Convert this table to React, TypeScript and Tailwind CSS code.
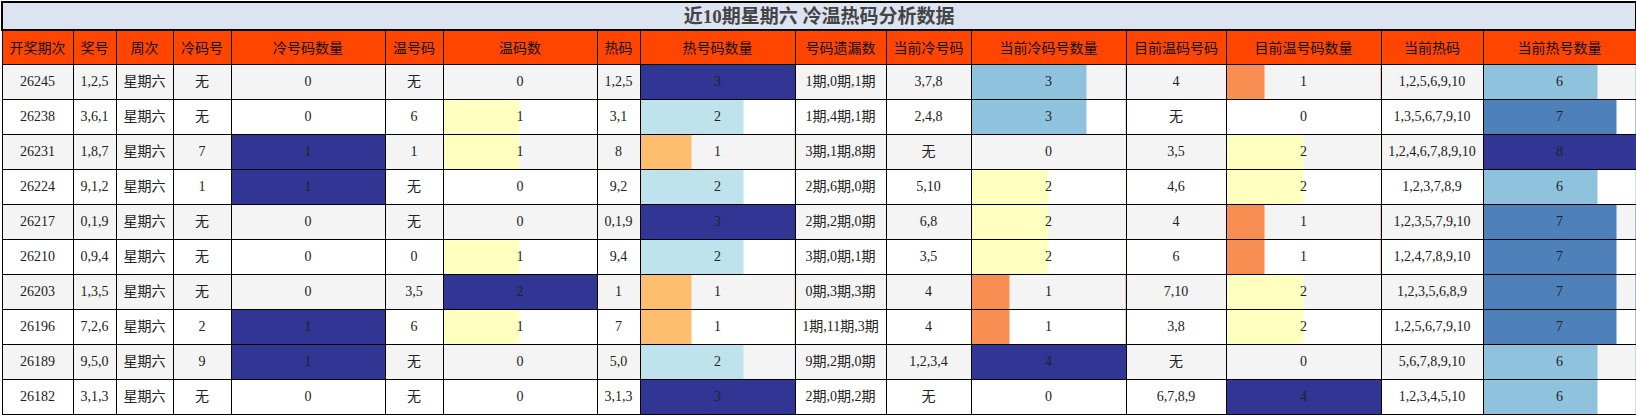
import React from "react";

type Bar = { v: number; pct: number; color: string };
type Cell = string | Bar;

const NAVY = "#313695";
const YELLOW = "#ffffbf";
const HOT1 = "#fdbf6f";
const HOT2 = "#bee3ed";
const ORANGE = "#f98e52";
const LB = "#8fc3dd";
const STEEL = "#4e81ba";

const b = (v: number, pct: number, color: string): Bar => ({ v, pct, color });
const z = (): Bar => ({ v: 0, pct: 0, color: "transparent" });

const headers = [
  "开奖期次",
  "奖号",
  "周次",
  "冷码号",
  "冷号码数量",
  "温号码",
  "温码数",
  "热码",
  "热号码数量",
  "号码遗漏数",
  "当前冷号码",
  "当前冷码号数量",
  "目前温码号码",
  "目前温号码数量",
  "当前热码",
  "当前热号数量",
];

// column widths read off the screenshot
const widths = [71, 43, 57, 58, 154, 58, 154, 43, 155, 91, 85, 155, 100, 155, 102, 153];

const rows: Cell[][] = [
  ["26245", "1,2,5", "星期六", "无", z(), "无", z(), "1,2,5", b(3, 100, NAVY), "1期,0期,1期", "3,7,8", b(3, 75, LB), "4", b(1, 25, ORANGE), "1,2,5,6,9,10", b(6, 75, LB)],
  ["26238", "3,6,1", "星期六", "无", z(), "6", b(1, 50, YELLOW), "3,1", b(2, 67, HOT2), "1期,4期,1期", "2,4,8", b(3, 75, LB), "无", z(), "1,3,5,6,7,9,10", b(7, 87.5, STEEL)],
  ["26231", "1,8,7", "星期六", "7", b(1, 100, NAVY), "1", b(1, 50, YELLOW), "8", b(1, 33, HOT1), "3期,1期,8期", "无", z(), "3,5", b(2, 50, YELLOW), "1,2,4,6,7,8,9,10", b(8, 100, NAVY)],
  ["26224", "9,1,2", "星期六", "1", b(1, 100, NAVY), "无", z(), "9,2", b(2, 67, HOT2), "2期,6期,0期", "5,10", b(2, 50, YELLOW), "4,6", b(2, 50, YELLOW), "1,2,3,7,8,9", b(6, 75, LB)],
  ["26217", "0,1,9", "星期六", "无", z(), "无", z(), "0,1,9", b(3, 100, NAVY), "2期,2期,0期", "6,8", b(2, 50, YELLOW), "4", b(1, 25, ORANGE), "1,2,3,5,7,9,10", b(7, 87.5, STEEL)],
  ["26210", "0,9,4", "星期六", "无", z(), "0", b(1, 50, YELLOW), "9,4", b(2, 67, HOT2), "3期,0期,1期", "3,5", b(2, 50, YELLOW), "6", b(1, 25, ORANGE), "1,2,4,7,8,9,10", b(7, 87.5, STEEL)],
  ["26203", "1,3,5", "星期六", "无", z(), "3,5", b(2, 100, NAVY), "1", b(1, 33, HOT1), "0期,3期,3期", "4", b(1, 25, ORANGE), "7,10", b(2, 50, YELLOW), "1,2,3,5,6,8,9", b(7, 87.5, STEEL)],
  ["26196", "7,2,6", "星期六", "2", b(1, 100, NAVY), "6", b(1, 50, YELLOW), "7", b(1, 33, HOT1), "1期,11期,3期", "4", b(1, 25, ORANGE), "3,8", b(2, 50, YELLOW), "1,2,5,6,7,9,10", b(7, 87.5, STEEL)],
  ["26189", "9,5,0", "星期六", "9", b(1, 100, NAVY), "无", z(), "5,0", b(2, 67, HOT2), "9期,2期,0期", "1,2,3,4", b(4, 100, NAVY), "无", z(), "5,6,7,8,9,10", b(6, 75, LB)],
  ["26182", "3,1,3", "星期六", "无", z(), "无", z(), "3,1,3", b(3, 100, NAVY), "2期,0期,2期", "无", z(), "6,7,8,9", b(4, 100, NAVY), "1,2,3,4,5,10", b(6, 75, LB)],
];

export default function App() {
  return (
    <div
      className="w-[1636px] h-[415px] overflow-hidden bg-white text-[#222] pl-px pt-px"
      style={{ fontFamily: '"Liberation Serif", "Noto Sans CJK SC", serif' }}
    >
      <table className="table-fixed border-collapse w-[1634px] text-[14px] leading-none">
        <colgroup>
          {widths.map((w, i) => (
            <col key={i} style={{ width: w }} />
          ))}
        </colgroup>
        <thead>
          <tr className="h-[28px]">
            <th
              colSpan={16}
              className="border-2 border-black bg-[#dce3f1] text-[19px] font-bold text-[#444] text-center p-0"
            >
              近10期星期六 冷温热码分析数据
            </th>
          </tr>
          <tr className="h-[34px] bg-[#ff4500]">
            {headers.map((h) => (
              <th
                key={h}
                className="border border-black font-normal text-[14px] text-[#111] text-center p-0"
                style={{ fontFamily: '"Noto Sans CJK SC", sans-serif' }}
              >
                {h}
              </th>
            ))}
          </tr>
        </thead>
        <tbody>
          {rows.map((row, ri) => (
            <tr key={ri} className={ri % 2 === 0 ? "h-[35px] bg-[#f4f4f4]" : "h-[35px] bg-white"}>
              {row.map((c, ci) =>
                typeof c === "string" ? (
                  <td key={ci} className="border border-black text-center p-0 whitespace-nowrap">
                    {c}
                  </td>
                ) : (
                  <td
                    key={ci}
                    className="border border-black text-center p-0"
                    style={
                      c.pct > 0
                        ? {
                            backgroundImage: `linear-gradient(90deg, ${c.color} ${c.pct}%, transparent ${c.pct}%)`,
                          }
                        : undefined
                    }
                  >
                    {c.v}
                  </td>
                )
              )}
            </tr>
          ))}
        </tbody>
      </table>
    </div>
  );
}
